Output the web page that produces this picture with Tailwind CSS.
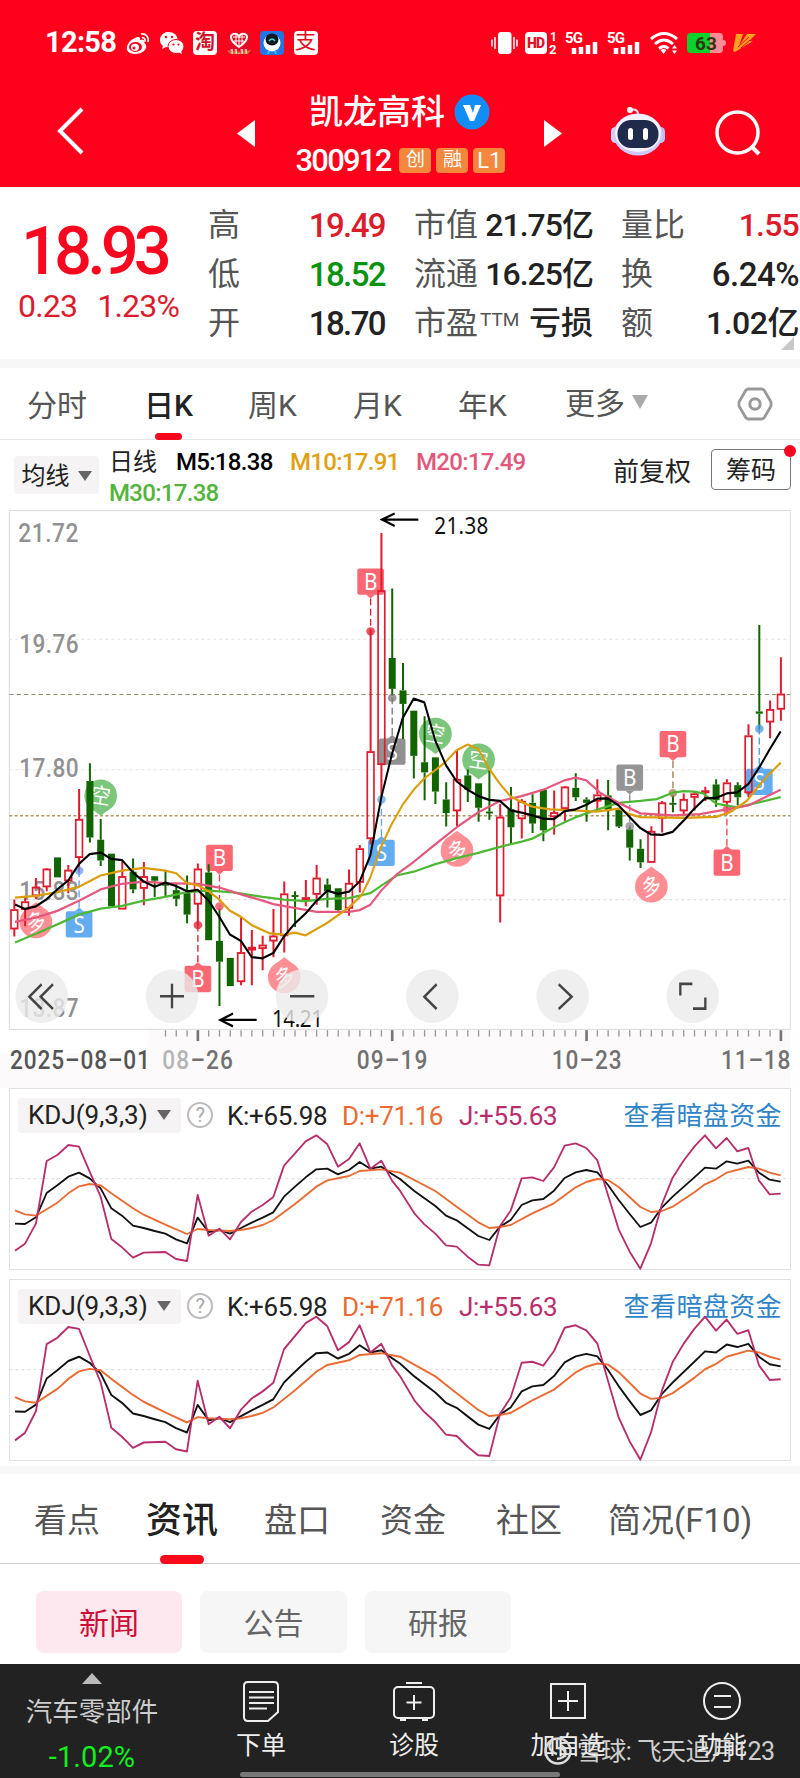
<!DOCTYPE html>
<html lang="zh-CN">

<head>
    <meta charset="UTF-8">
    <meta name="viewport" content="width=device-width, initial-scale=1.0">
    <title>凯龙高科 300912</title>
    <script src="https://cdn.jsdelivr.net/npm/@tailwindcss/browser@4"></script>
</head>

<body class="w-[800px] h-[1778px] overflow-hidden bg-white font-['Roboto','Noto_Sans_CJK_SC',sans-serif] text-[#222]">
    <header class="h-[187px] bg-[#ff001c] text-white">
        <!-- status bar -->
        <div class="h-[85px] flex items-center pl-[45px] pr-[44px]">
            <span class="w-[81px] text-[29px] font-bold leading-none tracking-[-0.700px]">12:58</span>
            <div class="flex gap-[9.5px]">
                <svg class="w-6 h-6" viewBox="0 0 24 24">
                    <path d="M9 7c3-2 6-1 5 2 4-1 6 1 4 3 3 1 3 5 0 8-5 4-15 4-17-1C0 14 4 9 9 7z" fill="#fff" />
                    <ellipse cx="9.500" cy="16" rx="6.500" ry="5" fill="#ff001c" />
                    <ellipse cx="9" cy="16.300" rx="4" ry="3.600" fill="#fff" />
                    <circle cx="8" cy="17" r="1.500" fill="#ff001c" />
                    <path d="M15 3c5-1 8 3 7 8M16 6.500c2 0 3.500 1.500 3 4" fill="none" stroke="#fff" stroke-width="1.600" />
                </svg>
                <svg class="w-6 h-6" viewBox="0 0 24 24">
                    <path d="M9 1C4 1 0 4.500 0 9c0 2.500 1 4.500 3 6l-1 3 4-2 3 .5z" fill="#fff" />
                    <ellipse cx="9" cy="8.500" rx="8.500" ry="7.500" fill="#fff" />
                    <ellipse cx="16" cy="15.500" rx="8" ry="7" fill="#fff" stroke="#ff001c" stroke-width="1" />
                    <path d="M18 21l4 2-1-4z" fill="#fff" />
                    <g fill="#ff001c"><circle cx="6" cy="6" r="1.200" /><circle cx="12" cy="6" r="1.200" /><circle cx="13.500" cy="13.500" r="1.100" /><circle cx="18.500" cy="13.500" r="1.100" /></g>
                </svg>
                <span class="w-6 h-6 rounded bg-white text-[#d0142c] text-[20px] leading-[22px] text-center font-bold">淘</span>
                <svg class="w-6 h-6" viewBox="0 0 24 24">
                    <rect width="24" height="24" rx="3" fill="#e80a20" />
                    <path d="M12 16C6 12 4 9 4 6s5-5 8-1c3-4 8-2 8 1s-2 6-8 10z" fill="none" stroke="#fff" stroke-width="2" />
                    <path d="M6 6h12M7 10h10M9 3v10M12 5v11M15 3v10" stroke="#fff" stroke-width="1" />
                    <path d="M0 19q12 3 24 0l-3 4H3z" fill="#f0602a" />
                    <text x="12" y="23" font-size="7" font-weight="700" text-anchor="middle" fill="#fff">11.11</text>
                </svg>
                <svg class="w-6 h-6" viewBox="0 0 24 24">
                    <rect width="24" height="24" rx="4" fill="#2375e2" />
                    <ellipse cx="12" cy="12" rx="8.500" ry="8.500" fill="#fff" />
                    <ellipse cx="12" cy="8.500" rx="6.500" ry="6" fill="#101820" />
                    <path d="M9 10q3-4 6 0" stroke="#3fe0d0" stroke-width="1.300" fill="none" />
                    <path d="M9 20l-1 3M15 20l1 3" stroke="#30c0f0" stroke-width="2" />
                </svg>
                <span class="w-6 h-6 rounded bg-white text-[#e00c24] text-[21px] leading-[21px] text-center">支</span>
            </div>
            <div class="flex items-center ml-auto">
                <svg class="w-[27px] h-6" viewBox="0 0 27 24">
                    <rect x="7" y="1" width="13.500" height="22" rx="3" fill="#fff" />
                    <path d="M1 8.500v7M4 6v12M23 6v12M26 8.500v7" stroke="#fff" stroke-width="1.500" />
                </svg>
                <svg class="w-[32px] h-6 ml-[7px] overflow-visible" viewBox="0 0 32 24">
                    <rect y="1" width="22" height="22" rx="4" fill="#fff" />
                    <text x="11" y="17" font-size="14" font-weight="900" text-anchor="middle" textLength="18" fill="#e8102a">HD</text>
                    <text x="25" y="10" font-size="12" font-weight="700" fill="#fff">1</text>
                    <text x="24" y="23" font-size="13" font-weight="700" fill="#fff">2</text>
                </svg>
                <svg class="w-[34px] h-6 ml-[8px] overflow-visible" viewBox="0 0 34 24">
                    <text x="0" y="11.500" font-size="15" font-weight="700" textLength="18" fill="#fff">5G</text>
                    <path d="M9 17v6M16 16v7M23 14v9M30 11v12" stroke="#fff" stroke-width="4.500" />
                </svg>
                <svg class="w-[34px] h-6 ml-[8px] overflow-visible" viewBox="0 0 34 24">
                    <text x="0" y="11.500" font-size="15" font-weight="700" textLength="18" fill="#fff">5G</text>
                    <path d="M9 17v6M16 16v7M23 14v9M30 11v12" stroke="#fff" stroke-width="4.500" />
                </svg>
                <svg class="w-[28px] h-6 ml-[9px]" viewBox="0 0 28 24">
                    <path d="M1 8q13-11 26 0M5 13q9-8 18 0M9 17.500q5-4 9.500 0" stroke="#fff" stroke-width="3" fill="none" />
                    <path d="M10.500 19q3-2 6 0L13.500 23zM22 17.500l2.500-3.500 2.500 3.500zM22 19.500l2.500 3.500 2.500-3.500z" fill="#fff" />
                </svg>
                <svg class="w-[40px] h-6 ml-[8px]" viewBox="0 0 40 24">
                    <path d="M4 2h30q3 0 3 4v3q3 0 3 3t-3 3v3q0 4-3 4H24V2z" fill="#ff8b97" />
                    <path d="M5 2h19v20H5q-4 0-4-4V6q0-4 4-4z" fill="#0bd12c" />
                    <text x="20" y="18.500" font-size="19" font-weight="700" text-anchor="middle" fill="#31350e">63</text>
                </svg>
                <svg class="w-[23px] h-5 ml-[7px]" viewBox="0 0 23 20">
                    <path d="M3 1h7L6 13 14 1h9l-7 7h4L2 19 0 18z" fill="#ffa01e" />
                    <path d="M5 14L16 4M8 15l9-8" stroke="#ff001c" stroke-width="1" />
                </svg>
            </div>
        </div>

        <!-- title bar -->
        <div class="h-[102px] flex items-start pl-[57px]">
            <svg class="w-[27px] h-[48px] mt-[22px]" viewBox="0 0 27 48"><path d="M25 2L3 24l22 22" stroke="#fff" stroke-width="4" fill="none" /></svg>
            <svg class="w-[18px] h-[27px] ml-[153px] mt-[35px]" viewBox="0 0 18 27"><path d="M18 0v27L0 13.500z" fill="#fff" /></svg>
            <div class="w-[227px] ml-[32px]">
                <div class="flex items-center h-[54px] pl-[22px] gap-[9px]">
                    <h1 class="text-[34px] leading-none font-medium">凯龙高科</h1>
                    <svg class="w-[36px] h-[36px]" viewBox="0 0 36 36">
                        <circle cx="18" cy="18" r="17.500" fill="#128df5" />
                        <path d="M9 11h7l3 8 2-8h6l-7 16h-4z" fill="#fff" />
                    </svg>
                </div>
                <div class="flex items-center justify-center gap-[5px] h-[42px]">
                    <span class="text-[31px] leading-none font-medium tracking-[-1.800px] mr-[4px]">300912</span>
                    <span class="w-[32px] h-[25px] rounded-sm bg-[#f3873e] text-[19px] leading-[24px] text-center">创</span>
                    <span class="w-[32px] h-[25px] rounded-sm bg-[#f3873e] text-[19px] leading-[24px] text-center">融</span>
                    <span class="w-[32px] h-[25px] rounded-sm bg-[#f3873e] text-[22px] leading-[25px] text-center">L1</span>
                </div>
            </div>
            <svg class="w-[18px] h-[27px] ml-[30px] mt-[35px]" viewBox="0 0 18 27"><path d="M0 0v27l18-13.500z" fill="#fff" /></svg>
            <svg class="w-[54px] h-[50px] ml-[49px] mt-[21px]" viewBox="0 0 54 50">
                <path d="M19 4q9-2 8 6" stroke="#e6e0ff" stroke-width="2" fill="none" />
                <circle cx="19" cy="4" r="3" fill="#fff" />
                <rect x="0" y="21" width="9" height="16" rx="4.500" fill="#d6cfff" />
                <rect x="45" y="21" width="9" height="16" rx="4.500" fill="#c3bdfa" />
                <ellipse cx="27" cy="28.500" rx="24.500" ry="21" fill="#cfc8fb" />
                <ellipse cx="27" cy="27" rx="23" ry="19" fill="#f5f2ff" />
                <rect x="6.500" y="14" width="41" height="28" rx="13.500" fill="#202a4a" />
                <rect x="17" y="22" width="5" height="12" rx="2.500" fill="#fff" />
                <rect x="32" y="22" width="5" height="12" rx="2.500" fill="#fff" />
            </svg>
            <svg class="w-[46px] h-[46px] ml-[50px] mt-[25px]" viewBox="0 0 46 46">
                <circle cx="22.500" cy="22.500" r="20.500" fill="none" stroke="#fff" stroke-width="3.500" />
                <path d="M36 36l8 8" stroke="#fff" stroke-width="4" />
            </svg>
        </div>
    </header>

    <!-- quote -->
    <section class="relative h-[172px] flex pt-[14px] text-[32px] leading-[49px] whitespace-nowrap">
        <div class="w-[208px]">
            <p class="pl-[21px] pt-[14px] text-[67px] leading-[72px] font-medium tracking-[-5px] text-[#f8071f]">18.93</p>
            <p class="pl-[18px] leading-[38px] text-[32px] tracking-[-0.800px] text-[#db1c2c]">0.23<span class="ml-[20px]">1.23%</span></p>
        </div>
        <div class="w-[177px]">
            <p class="flex justify-between"><span class="text-[#555]">高</span><span class="text-[33px] tracking-[-1.600px] font-medium text-[#db1c2c]">19.49</span></p>
            <p class="flex justify-between"><span class="text-[#555]">低</span><span class="text-[33px] tracking-[-1.600px] font-medium text-[#0a930f]">18.52</span></p>
            <p class="flex justify-between"><span class="text-[#555]">开</span><span class="text-[33px] tracking-[-1.600px] font-medium">18.70</span></p>
        </div>
        <div class="w-[179px] ml-[29px]">
            <p class="flex justify-between"><span class="text-[#555]">市值</span><span class="tracking-[-1px] font-medium">21.75亿</span></p>
            <p class="flex justify-between"><span class="text-[#555]">流通</span><span class="tracking-[-1px] font-medium">16.25亿</span></p>
            <p class="flex justify-between"><span class="flex text-[#555]">市盈<span class="text-[19px] leading-[42px] ml-[2px]">TTM</span></span><span class="font-medium">亏损</span></p>
        </div>
        <div class="w-[178px] ml-[28px]">
            <p class="flex justify-between"><span class="text-[#555]">量比</span><span class="tracking-[-0.800px] font-medium text-[#db1c2c]">1.55</span></p>
            <p class="flex justify-between"><span class="text-[#555]">换</span><span class="text-[33px] tracking-[-0.500px] font-medium">6.24%</span></p>
            <p class="flex justify-between"><span class="text-[#555]">额</span><span class="tracking-[-0.500px] font-medium">1.02亿</span></p>
        </div>
        <svg class="absolute right-[6px] bottom-[9px] w-[13px] h-[13px]" viewBox="0 0 13 13"><path d="M13 0v13H0z" fill="#c8c8c8" /></svg>
    </section>
    <div class="h-[9px] bg-[#f7f7f7]"></div>

    <!-- period tabs -->
    <nav class="h-[72px] flex border-b border-[#e6e6e6] text-[30px] leading-[75px] text-[#555] whitespace-nowrap">
        <a class="w-[60px] ml-[27px]">分时</a>
        <a class="relative w-[50px] ml-[57px] text-[#222] font-medium">日K<span class="absolute left-[11px] -bottom-px w-[27px] h-[7px] rounded-full bg-[#f8071f]"></span></a>
        <a class="w-[50px] ml-[54px]">周K</a>
        <a class="w-[50px] ml-[55px]">月K</a>
        <a class="w-[50px] ml-[55px]">年K</a>
        <a class="flex items-center ml-[57px]">更多<svg class="w-4 h-[14px] ml-[7px] -mt-1" viewBox="0 0 16 14"><path d="M0 0h16L8 14z" fill="#aaa" /></svg></a>
        <svg class="w-[36px] h-[34px] ml-auto mr-[27px] mt-[19px]" viewBox="0 0 36 34">
            <path d="M11 2h14l2 1 7 12v4l-7 12-2 1H11l-2-1L2 19v-4L9 3z" fill="none" stroke="#999" stroke-width="2.800" stroke-linejoin="round" />
            <circle cx="18" cy="17" r="5.200" fill="none" stroke="#999" stroke-width="3" />
        </svg>
    </nav>

    <!-- moving averages -->
    <section class="h-[68px] flex pl-[14px] text-[24px] whitespace-nowrap">
        <button class="w-[85px] h-[38px] mt-[16px] rounded-sm bg-[#f5f3f4] flex items-center justify-center gap-[8px] leading-none pt-0.5">均线<svg class="w-[14px] h-[10px]" viewBox="0 0 14 10"><path d="M0 0h14L7 10z" fill="#666" /></svg></button>
        <div class="w-[480px] ml-[10px] pt-[7px] leading-[31px] font-medium">
            <p class="flex tracking-[-0.700px]"><span class="w-[67px] tracking-normal font-normal">日线</span><span class="w-[114px] text-black">M5:18.38</span><span class="w-[126px] text-[#e0a010]">M10:17.91</span><span class="text-[#e2577b]">M20:17.49</span></p>
            <p class="tracking-[-0.700px] text-[#52b43a]">M30:17.38</p>
        </div>
        <span class="ml-[24px] mt-[10px] w-[98px] text-[26px] leading-[44px]">前复权</span>
        <button class="relative w-[80px] h-[41px] mt-[9px] border border-[#777] rounded text-[25px] leading-none pt-0.5">筹码<span class="absolute -right-[6px] -top-[5px] w-3 h-3 rounded-full bg-[#fb0420]"></span></button>
    </section>

    <!-- K line chart: three units per pixel across, about 2.66 down -->
    <svg id="kline" class="block w-[800px] h-[580px]" viewBox="0 21.300 2400 1541.500" preserveAspectRatio="none">
        <path d="M450 1407H2371V1562H0V1470H440z" fill="#fdfafb" />
        <rect x="28" y="28" width="2343" height="1379" fill="#fff" stroke="#ddd" stroke-width="3" />
        <path d="M28 370H2371M28 717H2371M28 1062H2371" stroke="#e2e2e2" stroke-width="3" stroke-dasharray="9 9" />
        <path d="M28 517H2371" stroke="#93936f" stroke-width="3" stroke-dasharray="13 9" />
        <path d="M28 839H2371" stroke="#b09660" stroke-width="4" stroke-dasharray="9 7" />
        <g font-size="68" fill="#919191" font-weight="500">
            <text x="55" y="112" textLength="180">21.72</text>
            <text x="58" y="408" textLength="178">19.76</text>
            <text x="58" y="735" textLength="178">17.80</text>
            <text x="58" y="1062" textLength="178">15.83</text>
            <text x="58" y="1375" textLength="178">13.87</text>
        </g>
        <g id="markers"></g>
        <g id="candles" stroke-width="6"></g>
        <g id="dots" fill-opacity="0.75"></g>
        <g fill="none" stroke-width="6" stroke-linejoin="round">
            <polyline stroke="#4db834" points="45,1176 108,1153 172,1128 237,1102 302,1086 366,1079 431,1065 496,1055 561,1042 626,1038 700,1043 788,1055 852,1062 917,1066 980,1060 1047,1058 1111,1045 1144,1025 1190,998 1241,988 1306,968 1370,952 1435,938 1500,922 1565,908 1597,900 1662,870 1727,843 1792,823 1856,805 1921,800 1970,795 2018,778 2050,774 2083,775 2110,780 2148,807 2212,817 2280,803 2342,790" />
            <polyline stroke="#e5577c" points="45,1121 108,1110 172,1092 237,1065 302,1035 366,1020 431,1014 496,1018 593,1020 658,1030 723,1048 788,1065 820,1074 870,1082 950,1095 1047,1095 1079,1090 1111,1076 1144,1038 1190,995 1241,962 1306,915 1370,870 1435,830 1500,800 1565,787 1630,770 1694,745 1727,738 1759,745 1800,778 1856,805 1921,833 2018,838 2100,835 2180,822 2245,812 2300,788 2342,770" />
            <polyline stroke="#dd9c0a" points="45,1057 108,1052 172,1042 237,1028 302,998 366,985 431,978 496,985 528,992 561,1018 593,1024 626,1040 658,1062 690,1092 723,1108 755,1130 810,1152 852,1155 885,1150 917,1157 980,1125 1047,1083 1085,1050 1111,1003 1144,920 1176,860 1208,810 1241,770 1273,740 1306,718 1338,695 1370,665 1403,650 1435,662 1468,715 1500,755 1532,788 1565,803 1597,815 1650,822 1720,825 1790,828 1856,820 1889,835 1921,843 2050,845 2148,842 2190,830 2240,800 2290,745 2342,698" />
            <polyline stroke="#000" points="45,1075 75,1087 108,1080 140,1061 172,1035 205,1011 237,967 269,941 302,937 334,954 366,957 399,990 431,1014 464,1028 496,1017 528,1026 561,1040 593,1036 626,1065 658,1108 690,1155 723,1172 755,1215 788,1218 820,1204 852,1160 885,1125 917,1099 949,1066 982,1038 1014,1047 1047,1041 1079,1014 1111,945 1144,790 1176,675 1208,580 1241,528 1273,538 1306,640 1338,705 1370,748 1403,770 1435,787 1468,797 1500,800 1532,825 1565,831 1597,838 1630,847 1662,848 1694,827 1727,822 1759,810 1792,794 1824,793 1856,812 1889,843 1921,872 1953,889 1986,890 2018,882 2050,853 2083,820 2115,793 2148,792 2180,780 2212,777 2245,755 2277,712 2309,663 2342,615" />
        </g>
        <g stroke="#000" stroke-width="6" fill="none">
            <path d="M1255 52H1146M1184 36L1146 52l38 17M770 1382H661M699 1365L661 1382l38 17" />
        </g>
        <g font-size="62" fill="#111" font-family="'Noto Sans', sans-serif">
            <text x="1303" y="90" textLength="162">21.38</text>
            <text x="816" y="1402" textLength="153">14.21</text>
        </g>
        <g fill="#ebebeb" fill-opacity="0.8">
            <ellipse cx="125" cy="1319" rx="79" ry="71" />
            <ellipse cx="516" cy="1319" rx="79" ry="71" />
            <ellipse cx="906" cy="1319" rx="79" ry="71" />
            <ellipse cx="1297" cy="1319" rx="79" ry="71" />
            <ellipse cx="1688" cy="1319" rx="79" ry="71" />
            <ellipse cx="2078" cy="1319" rx="79" ry="71" />
        </g>
        <path d="M125 1287l-37 33 37 33M159 1287l-37 33 37 33M480 1319h72M516 1286v65M870 1319h73M1310 1287l-37 33 37 33M1676 1287l39 33-39 33M2041 1317v-31h36M2116 1322v30h-37" fill="none" stroke="#444" stroke-width="7" />
        <g id="ticks" stroke="#999"></g>
        <g font-size="68" fill="#727272" font-weight="500">
            <text x="30" y="1512" textLength="420" fill="#555">2025–08–01</text>
            <text x="487" y="1512" textLength="212"><tspan fill="#b5b5b5">08</tspan>–26</text>
            <text x="1070" y="1512" textLength="212">09–19</text>
            <text x="1655" y="1512" textLength="210">10–23</text>
            <text x="2163" y="1512" textLength="208">11–18</text>
        </g>
    </svg>

    <!-- KDJ panels -->
    <section class="relative h-[182px] mx-[9px] border border-[#e2e2e2]">
        <svg class="absolute -left-px -top-px w-[782px] h-[182px]" viewBox="27 54 2346 546">
            <path d="M28 326H2371" stroke="#ddd" stroke-width="3" stroke-dasharray="9 9" />
            <g id="kdj" fill="none" stroke-width="5.500" stroke-linejoin="round">
                <polyline stroke="#111" points="45,461 75,462 108,442 140,369 172,346 205,320 237,308 269,325 302,355 334,415 366,437 399,467 431,474 464,483 496,491 528,508 561,520 593,443 626,486 658,480 690,491 723,474 755,458 788,443 820,427 852,380 885,350 917,322 949,298 982,296 1014,313 1047,300 1079,276 1111,296 1144,290 1176,312 1200,327 1243,363 1306,408 1338,437 1370,451 1403,475 1435,498 1468,510 1500,470 1532,450 1565,405 1597,391 1630,387 1662,362 1694,324 1727,307 1759,300 1792,307 1824,345 1856,390 1889,432 1921,471 1953,458 1986,412 2018,380 2083,322 2115,293 2148,296 2180,274 2212,281 2245,272 2277,308 2309,329 2342,335" />
                <polyline stroke="#ea6a32" points="45,421 75,433 108,437 172,398 205,370 237,349 269,342 302,346 334,370 399,415 431,434 496,464 561,492 593,477 626,480 690,483 723,480 755,474 788,465 820,450 885,402 949,350 982,331 1047,318 1079,303 1144,298 1200,308 1306,363 1370,410 1435,457 1468,474 1500,471 1532,465 1597,430 1662,400 1727,352 1759,336 1792,327 1824,330 1856,351 1921,411 1953,426 1986,423 2018,410 2083,367 2115,343 2148,328 2180,308 2245,291 2277,296 2309,308 2342,316" />
                <polyline stroke="#b82e6c" points="45,542 75,521 108,460 140,273 172,255 205,225 237,230 269,305 302,380 334,507 366,532 399,563 431,548 496,546 528,567 561,573 593,375 626,497 658,476 690,508 723,456 755,425 788,405 820,381 852,287 885,250 917,214 949,196 982,223 1014,290 1047,267 1079,220 1111,296 1144,272 1176,332 1200,362 1243,430 1273,463 1306,491 1338,526 1370,530 1403,560 1435,584 1468,586 1500,468 1532,422 1565,325 1597,322 1630,333 1662,292 1694,227 1727,220 1759,234 1792,271 1824,375 1856,478 1889,545 1921,596 1953,520 1986,402 2018,323 2050,273 2083,230 2115,196 2148,235 2180,204 2212,244 2245,234 2277,332 2309,373 2342,371" />
            </g>
        </svg>
        <div class="flex items-center h-[36px] mt-[8px] px-[8px] text-[26px] leading-none tracking-[-0.300px] whitespace-nowrap">
            <button class="w-[163px] h-[35px] rounded-sm bg-[#f5f3f4] px-[10px] flex items-center justify-between tracking-normal">KDJ(9,3,3)<svg class="w-[14px] h-[10px]" viewBox="0 0 14 10"><path d="M0 0h14L7 10z" fill="#666" /></svg></button>
            <span class="w-[26px] h-[26px] ml-[6px] rounded-full border-2 border-[#bbb] text-[#aaa] text-[20px] leading-[22px] text-center">?</span>
            <span class="w-[115px] ml-[14px] pt-0.5">K:+65.98</span>
            <span class="w-[117px] pt-0.5 text-[#ea6a32]">D:+71.16</span>
            <span class="pt-0.5 text-[#b82e6c]">J:+55.63</span>
            <a class="ml-auto pt-0.5 text-[#2f84c8] tracking-[0.400px]">查看暗盘资金</a>
        </div>
    </section>
    <section class="relative h-[182px] mt-[9px] mx-[9px] border border-[#e2e2e2]">
        <svg class="absolute -left-px -top-px w-[782px] h-[182px]" viewBox="27 54 2346 546">
            <path d="M28 326H2371" stroke="#ddd" stroke-width="3" stroke-dasharray="9 9" />
            <use href="#kdj" transform="translate(0 -43) scale(1 1.072)" />
        </svg>
        <div class="flex items-center h-[36px] mt-[8px] px-[8px] text-[26px] leading-none tracking-[-0.300px] whitespace-nowrap">
            <button class="w-[163px] h-[35px] rounded-sm bg-[#f5f3f4] px-[10px] flex items-center justify-between tracking-normal">KDJ(9,3,3)<svg class="w-[14px] h-[10px]" viewBox="0 0 14 10"><path d="M0 0h14L7 10z" fill="#666" /></svg></button>
            <span class="w-[26px] h-[26px] ml-[6px] rounded-full border-2 border-[#bbb] text-[#aaa] text-[20px] leading-[22px] text-center">?</span>
            <span class="w-[115px] ml-[14px] pt-0.5">K:+65.98</span>
            <span class="w-[117px] pt-0.5 text-[#ea6a32]">D:+71.16</span>
            <span class="pt-0.5 text-[#b82e6c]">J:+55.63</span>
            <a class="ml-auto pt-0.5 text-[#2f84c8] tracking-[0.400px]">查看暗盘资金</a>
        </div>
    </section>
    <div class="h-[8px] mt-[5px] bg-[#f7f7f7]"></div>

    <!-- content tabs -->
    <nav class="h-[90px] flex border-b border-[#ccc] text-[33px] leading-[94px] text-[#555] whitespace-nowrap">
        <a class="w-[66px] ml-[34px]">看点</a>
        <a class="relative w-[72px] ml-[46px] text-[36px] font-medium text-[#222]">资讯<span class="absolute left-[14px] -bottom-px w-[44px] h-[9px] rounded-full bg-[#fb0a1c]"></span></a>
        <a class="w-[66px] ml-[46px]">盘口</a>
        <a class="w-[66px] ml-[50px]">资金</a>
        <a class="w-[66px] ml-[50px]">社区</a>
        <a class="ml-[46px]">简况(F10)</a>
    </nav>
    <div class="h-[100px] pt-[27px] pl-[36px] flex gap-[18px] text-[30px] leading-[65px] text-center text-[#666]">
        <a class="w-[146px] h-[62px] rounded-lg bg-[#fde8ef] text-[#cf0c33]">新闻</a>
        <a class="w-[147px] h-[62px] rounded-lg bg-[#f6f6f6]">公告</a>
        <a class="w-[146px] h-[62px] rounded-lg bg-[#f6f6f6]">研报</a>
    </div>

    <!-- bottom bar -->
    <footer class="relative h-[115px] bg-[#222] flex text-[25px] leading-[34px] text-center text-[#eee]">
        <div class="w-[184px] pt-[9px] flex flex-col items-center">
            <svg class="w-5 h-[11px]" viewBox="0 0 20 11"><path d="M10 0l10 11H0z" fill="#bbb" /></svg>
            <span class="text-[26.5px] mt-[11px] text-[#ccc]">汽车零部件</span>
            <span class="text-[29px] mt-[11px] text-[#11f01e] tracking-[0.100px]">-1.02%</span>
        </div>
        <a class="w-[154px] pt-[16px] flex flex-col items-center">
            <svg class="w-[38px] h-[44px]" viewBox="0 0 38 44" fill="none" stroke="#eee" stroke-width="2">
                <path d="M6 2h26q4 0 4 4v26l-10 9H6q-4 0-4-4V6q0-4 4-4zM7 12h25M7 17.500h25M7 23h25M7 28.500h18" />
            </svg>
            <span class="mt-[5px]">下单</span>
        </a>
        <a class="w-[152px] pt-[16px] flex flex-col items-center">
            <svg class="w-[44px] h-[44px]" viewBox="0 0 44 44" fill="none" stroke="#eee" stroke-width="2">
                <rect x="2" y="7" width="40" height="31" rx="4" />
                <path d="M14 3h16M8 40h6M30 40h6M22 15v15M14.500 22.500h15" />
            </svg>
            <span class="mt-[5px]">诊股</span>
        </a>
        <a class="w-[156px] pt-[16px] flex flex-col items-center">
            <svg class="w-[38px] h-[44px]" viewBox="0 0 38 44" fill="none" stroke="#eee" stroke-width="2">
                <path d="M2 4h34v34H2zM19 11v20M9 21h20" />
            </svg>
            <span class="mt-[5px]">加自选</span>
        </a>
        <a class="w-[152px] pt-[16px] flex flex-col items-center">
            <svg class="w-[40px] h-[44px]" viewBox="0 0 40 44" fill="none" stroke="#eee" stroke-width="2">
                <circle cx="20" cy="21" r="18" />
                <path d="M12 16h17M12 27h17" />
            </svg>
            <span class="mt-[5px]">功能</span>
        </a>
        <svg class="absolute left-[540px] top-[71px] w-[240px] h-[34px]" viewBox="0 0 240 34">
            <g fill="none" stroke="#ddd" stroke-width="2.500">
                <circle cx="18" cy="16" r="12.500" />
                <path d="M11 6q-5 9 6 13M17 5v8q8 0 8 5t-8 6M21 10q6 4 4 12" />
            </g>
            <text x="37" y="25" font-size="25" textLength="198" fill="#e6e6e6" fill-opacity="0.9">雪球: 飞天追月123</text>
        </svg>
        <span class="absolute left-[240px] bottom-[2px] w-[320px] h-[5px] rounded-full bg-[#777]"></span>
    </footer>

    <script>
        const NS = 'http://www.w3.org/2000/svg';
        const RED = '#e01b2d', GREEN = '#126400';
        const add = (parent, tag, attrs, text) => {
            const el = document.createElementNS(NS, tag);
            for (const k in attrs) el.setAttribute(k, attrs[k]);
            if (text) el.textContent = text;
            parent.appendChild(el);
            return el;
        };
        const xAt = i => 43 + 32.39 * i;

        // direction (1 up, 0 down), high, body top, body bottom, low
        const candles = [
            [1, 1062, 1088, 1140, 1160], [1, 1058, 1067, 1088, 1133], [1, 1005, 1028, 1052, 1060], [1, 978, 980, 1028, 1040],
            [0, 950, 950, 1003, 1003], [1, 970, 983, 1012, 1045], [1, 768, 848, 950, 990], [0, 700, 747, 897, 910],
            [0, 848, 903, 958, 973], [0, 940, 940, 1080, 1080], [1, 960, 1000, 1087, 1087], [0, 953, 988, 1035, 1045],
            [1, 962, 1000, 1032, 1077], [0, 1000, 1000, 1012, 1055], [0, 985, 1020, 1022, 1055], [0, 1020, 1037, 1060, 1080],
            [0, 998, 1045, 1102, 1125], [1, 966, 980, 1074, 1130], [0, 968, 990, 1170, 1170], [0, 1085, 1172, 1227, 1345],
            [0, 1217, 1217, 1292, 1292], [1, 1108, 1202, 1280, 1290], [1, 1143, 1188, 1196, 1290], [1, 1158, 1182, 1192, 1250],
            [1, 1087, 1158, 1172, 1215], [1, 1014, 1046, 1158, 1203], [0, 1040, 1050, 1054, 1135], [1, 1010, 1056, 1064, 1080],
            [1, 970, 1004, 1048, 1076], [0, 1006, 1022, 1040, 1083], [0, 1032, 1032, 1090, 1092], [1, 982, 1018, 1085, 1105],
            [1, 917, 926, 1016, 1043], [1, 345, 668, 900, 915], [1, 88, 240, 703, 790], [0, 235, 420, 502, 520],
            [0, 433, 506, 542, 635], [0, 560, 560, 680, 740], [0, 575, 697, 724, 798], [0, 684, 684, 775, 808],
            [0, 750, 796, 832, 868], [1, 665, 742, 826, 868], [0, 716, 732, 770, 803], [0, 753, 753, 818, 855],
            [0, 718, 828, 832, 850], [1, 808, 842, 1052, 1123], [0, 763, 822, 870, 915], [1, 795, 800, 847, 900],
            [0, 782, 805, 860, 885], [0, 770, 770, 878, 907], [1, 772, 830, 842, 890], [1, 760, 762, 820, 853],
            [0, 726, 765, 790, 800], [0, 790, 796, 805, 855], [1, 742, 783, 800, 825], [0, 744, 785, 825, 878],
            [0, 822, 824, 868, 872], [0, 868, 875, 924, 958], [0, 902, 927, 963, 978], [1, 867, 880, 963, 963],
            [1, 800, 804, 846, 884], [0, 785, 805, 809, 830], [1, 780, 795, 826, 838], [1, 775, 780, 790, 825],
            [1, 762, 772, 776, 800], [0, 742, 756, 798, 815], [1, 742, 751, 803, 820], [0, 750, 758, 790, 812],
            [1, 596, 626, 778, 790], [0, 332, 562, 568, 610], [1, 533, 556, 590, 633], [1, 418, 515, 556, 587]
        ];
        const candleLayer = document.getElementById('candles');
        candles.forEach(([up, high, top, bottom, low], i) => {
            const x = xAt(i), color = up ? RED : GREEN;
            add(candleLayer, 'path', { d: `M${x} ${high}V${top}M${x} ${bottom}V${low}`, stroke: color });
            if (up) add(candleLayer, 'rect', { x: x - 10, y: top + 2, width: 20, height: Math.max(bottom - top - 3, 3), fill: 'none', stroke: color, 'stroke-width': 5 });
            else add(candleLayer, 'rect', { x: x - 10.5, y: top, width: 21, height: Math.max(bottom - top, 5), fill: color });
        });

        // signal flags: index, centre y, letter, colour, dot y
        const flags = [
            [33, 217, 'B', '#fb6772', 349, RED], [35, 669, 'S', '#909090', 526, '#777'], [34, 938, 'S', '#62acf0', 796, '#5aa8e8'],
            [19, 951, 'B', '#fb6772', 1080, '#f04050'], [17, 1273, 'B', '#fb6772', 1130, RED], [6, 1128, 'S', '#62acf0', 985, '#6a9cf0'],
            [57, 738, 'B', '#959595', 867, '#888'], [61, 649, 'B', '#fb6772', 779, '#a08050'], [66, 964, 'B', '#fb6772', 822, '#f04050'],
            [69, 749, 'S', '#62acf0', 608, '#4a9ce0']
        ];
        const markerLayer = document.getElementById('markers');
        const dotLayer = document.getElementById('dots');
        flags.forEach(([i, y, letter, color, dot, line]) => {
            const x = xAt(i), s = dot > y ? 1 : -1;
            add(markerLayer, 'path', { d: `M${x} ${y + 45 * s}V${dot}`, stroke: line, 'stroke-width': 4, 'stroke-dasharray': '18 9' });
            add(markerLayer, 'rect', { x: x - 40, y: y - 35, width: 80, height: 70, rx: 6, fill: color });
            add(markerLayer, 'path', { d: `M${x - 14} ${y + 34 * s}h28L${x} ${y + 45 * s}z`, fill: color });
            add(markerLayer, 'text', { x, y: y + 22, 'font-size': 62, 'text-anchor': 'middle', fill: '#fff', 'font-family': 'Noto Sans, sans-serif' }, letter);
            add(dotLayer, 'ellipse', { cx: x, cy: dot, rx: 13, ry: 11, fill: line });
        });

        // trend balloons: index, centre y, character
        const balloons = [[8, 786, '空'], [39, 622, '空'], [43, 690, '空'], [2, 1122, '多'], [25, 1268, '多'], [41, 932, '多'], [59, 1027, '多']];
        balloons.forEach(([i, y, ch]) => {
            const x = xAt(i), bear = ch === '空', s = bear ? 1 : -1, color = bear ? '#7cc67c' : '#ff8f94';
            add(markerLayer, 'ellipse', { cx: x, cy: y, rx: 49, ry: 43, fill: color });
            add(markerLayer, 'path', { d: `M${x - 24} ${y + 37 * s}L${x} ${y + 53 * s}L${x + 24} ${y + 37 * s}z`, fill: color });
            add(markerLayer, 'text', { x, y: y + 21, 'font-size': 58, 'text-anchor': 'middle', fill: '#fff', transform: `rotate(${bear ? 8 : -16} ${x} ${y})` }, ch);
        });

        const tickLayer = document.getElementById('ticks');
        for (let i = 14; i < 72; i++) {
            const major = i % 18 === 17;
            add(tickLayer, 'path', { d: `M${xAt(i)} 1409V${major ? 1438 : 1426}`, 'stroke-width': major ? 8 : 4, ...(major ? { stroke: '#777' } : {}) });
        }
    </script>
</body>

</html>
